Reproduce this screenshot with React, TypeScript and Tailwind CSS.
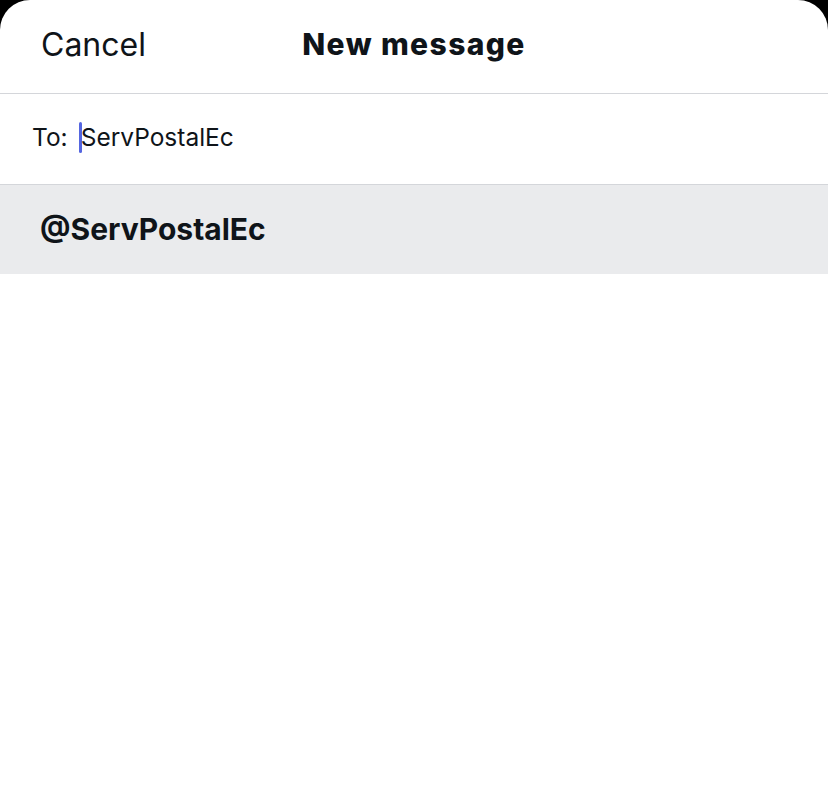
export default function App() {
    return (
        <div className="min-h-[806px] w-[828px] bg-black font-['Inter',sans-serif] text-[#0f1419]">
            <div className="flex min-h-[806px] flex-col rounded-t-[30px] bg-white">
                {/* header */}
                <div className="grid h-[94px] grid-cols-[1fr_auto_1fr] items-center border-b border-[#d4d6da] px-[41px] pb-[4px]">
                    <span className="justify-self-start text-[32px] font-normal">Cancel</span>
                    <span className="text-[30px] font-extrabold tracking-[1.4px]">New message</span>
                    <span></span>
                </div>
                {/* recipient input */}
                <div className="flex h-[91px] items-center border-b border-[#d4d6da] px-[32px] pb-[4px] text-[24.5px]">
                    <span>To:</span>
                    <span className="ml-[11px] h-[31px] w-[3px] rounded-sm bg-[#5566e0]"></span>
                    <span className="-ml-[1px]">ServPostalEc</span>
                </div>
                {/* suggestion */}
                <div className="flex h-[89px] items-center bg-[#eaebed] px-[40px]">
                    <span className="text-[30px] font-bold">@ServPostalEc</span>
                </div>
            </div>
        </div>
    );
}
